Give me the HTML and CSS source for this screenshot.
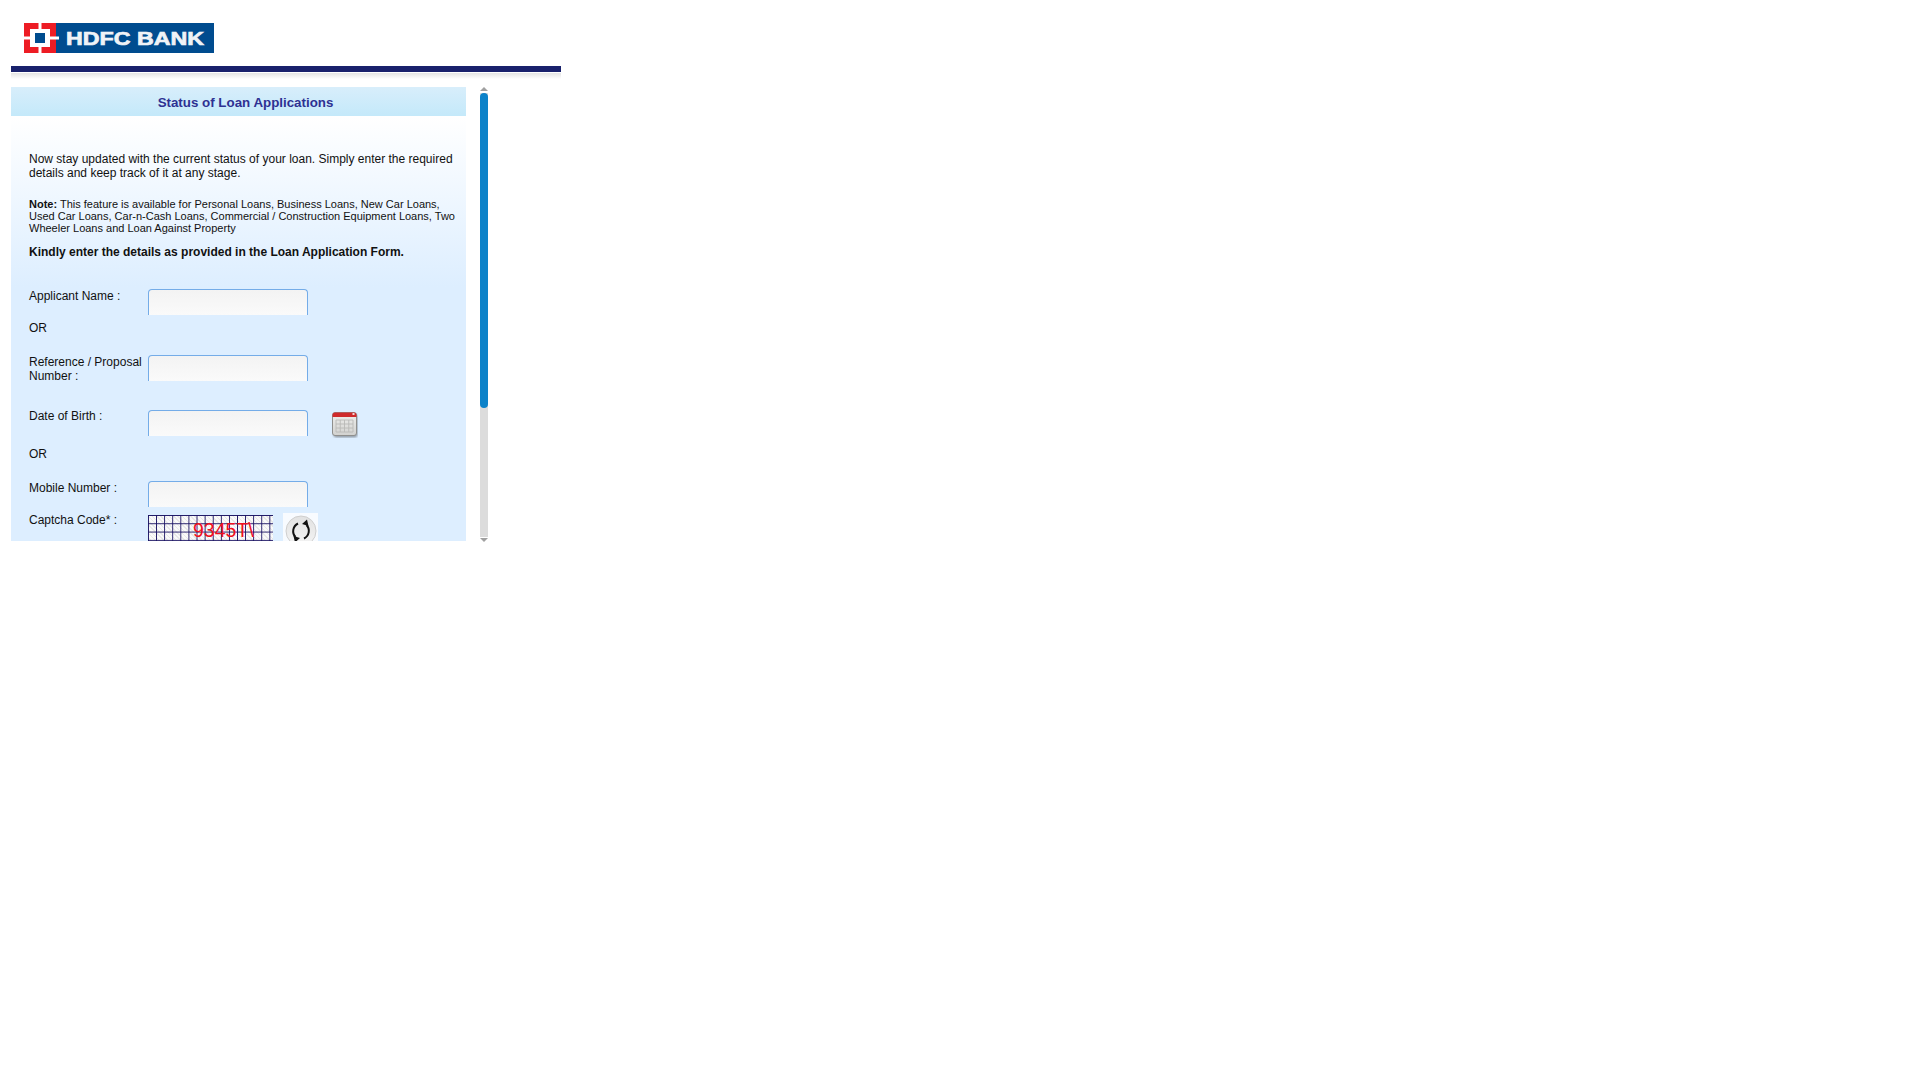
FILE: index.html
```html
<!DOCTYPE html>
<html lang="en">
<head>
<meta charset="utf-8">
<title>Status of Loan Applications</title>
<link rel="stylesheet" href="styles.css">
</head>
<body>
<div class="page">
  <header class="masthead">
    <svg class="logo" viewBox="0 0 190 30" width="190" height="30" aria-label="HDFC BANK">
      <rect x="0" y="0" width="190" height="30" fill="#004c8f"/>
      <rect x="0" y="0" width="32" height="30" fill="#ed1c24"/>
      <rect x="14.5" y="0" width="3" height="30" fill="#fff"/>
      <rect x="0" y="13.5" width="35" height="3" fill="#fff"/>
      <rect x="6" y="6" width="20" height="18" fill="#fff"/>
      <rect x="11" y="10" width="10" height="10" fill="#004c8f"/>
      <text class="logo-text" x="42" y="21.500" textLength="138" lengthAdjust="spacingAndGlyphs">HDFC BANK</text>
    </svg>
    <div class="rule"></div>
    <div class="rule-shadow"></div>
  </header>
  <div class="viewport">
    <main class="panel">
      <h1 class="title">Status of Loan Applications</h1>
      <div class="panel-body">
        <p class="intro">Now stay updated with the current status of your loan. Simply enter the required details and keep track of it at any stage.</p>
        <p class="note"><b>Note:</b> This feature is available for Personal Loans, Business Loans, New Car Loans, Used Car Loans, Car-n-Cash Loans, Commercial / Construction Equipment Loans, Two Wheeler Loans and Loan Against Property</p>
        <p class="kindly">Kindly enter the details as provided in the Loan Application Form.</p>
        <form class="form">
          <div class="row row-name">
            <label class="label">Applicant Name :</label>
            <input class="field" type="text">
          </div>
          <div class="or or-first">OR</div>
          <div class="row row-ref">
            <label class="label">Reference / Proposal Number :</label>
            <input class="field" type="text">
          </div>
          <div class="row row-dob">
            <label class="label label-dob">Date of Birth :</label>
            <input class="field" type="text">
            <svg class="cal" viewBox="0 0 26 26" width="26" height="26" aria-hidden="true">
              <defs>
                <filter id="calshadow" x="-20%" y="-20%" width="140%" height="140%">
                  <feGaussianBlur stdDeviation="0.9"/>
                </filter>
                <linearGradient id="calbody" x1="0" y1="0" x2="0" y2="1">
                  <stop offset="0" stop-color="#efefed"/>
                  <stop offset="1" stop-color="#d2d2d0"/>
                </linearGradient>
              </defs>
              <rect x="1.500" y="2" width="24" height="23.500" rx="3" fill="#000" opacity=".35" filter="url(#calshadow)"/>
              <rect x=".5" y=".5" width="24" height="23" rx="2.500" fill="url(#calbody)" stroke="#8f8f8d"/>
              <path d="M.5 5V3A2.500 2.500 0 0 1 3 .5h19A2.500 2.500 0 0 1 24.500 3v2z" fill="#cf2a2c"/>
              <path d="M20.500 1h2v2h-2z" fill="#f2d6d6"/>
              <path d="M4 8h17v12H4zM4 12h17M4 16h17M8.250 8v12M12.500 8v12M16.750 8v12" fill="none" stroke="#b9b9b7" stroke-width=".9"/>
            </svg>
          </div>
          <div class="or or-second">OR</div>
          <div class="row row-mobile">
            <label class="label">Mobile Number :</label>
            <input class="field" type="text">
          </div>
          <div class="row row-captcha">
            <label class="label">Captcha Code* :</label>
            <div class="captcha"><span class="captcha-text">9345T\</span></div>
            <div class="refresh">
              <svg viewBox="0 0 35 35" width="35" height="35" aria-hidden="true">
                <defs>
                  <linearGradient id="ball" x1="0" y1="0" x2="0" y2="1">
                    <stop offset="0" stop-color="#e2e2e2"/>
                    <stop offset="1" stop-color="#f4f4f4"/>
                  </linearGradient>
                </defs>
                <circle cx="18" cy="18" r="15" fill="url(#ball)" stroke="#cfcfcf"/>
                <path d="M15 10.500A8.500 8.500 0 0 0 12.500 24" fill="none" stroke="#111" stroke-width="2"/>
                <path d="M21 25.500A8.500 8.500 0 0 0 23.500 12" fill="none" stroke="#111" stroke-width="2"/>
                <path d="M19 11l5-4.500 1.500 6.500zM17 25l-5 4.500-1.500-6.500z" fill="#111"/>
              </svg>
            </div>
          </div>
        </form>
      </div>
    </main>
    <div class="scrollbar" aria-hidden="true">
      <div class="arrow arrow-up"></div>
      <div class="track"><div class="thumb"></div></div>
      <div class="arrow arrow-down"></div>
    </div>
  </div>
</div>
</body>
</html>
```
FILE: styles.css
```css
* { box-sizing: border-box; }
html, body { margin: 0; padding: 0; background: #fff; }
body { font-family: "Liberation Sans", Arial, sans-serif; font-size: 12px; line-height: 14px; color: #111; }

.page { padding: 23px 0 0 11px; }

.masthead { width: 550px; }
.logo { display: block; margin-left: 13px; }
.logo-text { font-family: "Liberation Sans", Arial, sans-serif; font-weight: 700; font-size: 19px; fill: #f0f3f7; stroke: #f0f3f7; stroke-width: .7px; }
.rule { height: 6px; margin-top: 13px; background: #19216c; }
.rule-shadow { height: 6px; margin-top: 1px; background: linear-gradient(#e4e4e4, #fff); }

.viewport { display: flex; gap: 14px; height: 455px; margin-top: 8px; }

.scrollbar { display: flex; flex-direction: column; width: 8px; }
.arrow { flex: none; width: 0; height: 0; border-left: 4px solid transparent; border-right: 4px solid transparent; }
.arrow-up { margin-bottom: 2px; border-bottom: 4px solid #a0a0a0; }
.arrow-down { margin-top: 1px; border-top: 4px solid #a0a0a0; }
.track { flex: 1; background: #dcdcdc; }
.thumb { height: 315px; border-radius: 4px; background: #0c82c9; }

.panel { width: 455px; height: 454px; overflow: hidden; background: linear-gradient(#fff 0, #fff 30px, #ddeeff 200px, #ddeeff 100%); }

.title { margin: 0; height: 29px; padding: 1px 0 0 14px; font-size: 13.33px; line-height: 29px; font-weight: 700; text-align: center; color: #2e3192; background: linear-gradient(#d8eefb, #c4e9fa); }

.panel-body { padding: 36px 6px 0 18px; }
.intro { margin: 0; }
.note { margin: 18px 0 0; font-size: 11px; line-height: 12px; }
.kindly { margin: 11px 0 0; font-weight: 700; }

.row { display: flex; align-items: flex-start; }
.label { display: block; width: 119px; flex: none; }
.field { display: block; width: 160px; height: 26px; padding: 0 4px; border: 1px solid #74ace8; border-bottom: 0; border-radius: 4px 4px 0 0; background: linear-gradient(#f3f3f3, #fafafa); }

.form { margin-top: 30px; }
.or { height: 14px; }
.or-first { margin-top: 6px; }
.row-ref { margin-top: 20px; }
.row-dob { margin-top: 27px; }
.label-dob { margin-top: -1px; }
.cal { display: block; flex: none; margin: 2px 0 0 24px; }
.or-second { margin-top: 9px; }
.row-mobile { margin-top: 20px; }
.row-captcha { margin-top: 6px; }

.captcha { position: relative; width: 125px; height: 40px; margin-top: 2px; background-color: #f5f5f5; background-image: linear-gradient(#1b1464 1px, transparent 1px), linear-gradient(90deg, #1b1464 1px, transparent 1px), repeating-linear-gradient(45deg, #e8e8e8 0 1px, #fafafa 1px 3px); background-size: 8.1px 8.3px, 8.1px 8.1px, auto; overflow: hidden; }
.captcha-text { position: absolute; left: 45px; top: 6px; font-size: 19.500px; line-height: 18px; color: #f01020; white-space: nowrap; }

.refresh { width: 35px; height: 38px; margin-left: 10px; background: #f8fbff; }
.refresh svg { display: block; }
```
